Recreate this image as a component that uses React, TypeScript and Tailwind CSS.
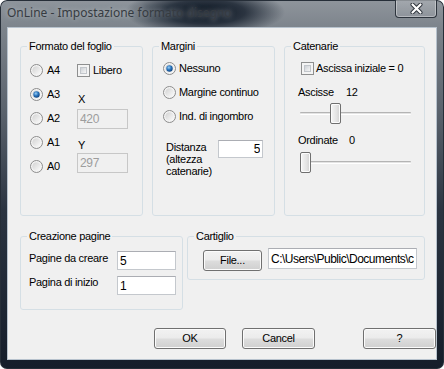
import type { ReactNode } from "react";

const UI = "font-[family-name:Liberation_Sans,Arial,sans-serif] text-[11px] tracking-[-0.3px] text-black";

function Radio({ checked = false }: { checked?: boolean }) {
  return (
    <svg width="13" height="13" viewBox="0 0 13 13" className="shrink-0">
      <defs>
        <linearGradient id="rb" x1="0" y1="0" x2="1" y2="1">
          <stop offset="0" stopColor="#d2d2d2" />
          <stop offset="1" stopColor="#fbfbfb" />
        </linearGradient>
        <radialGradient id="rd" cx="0.4" cy="0.35" r="0.7">
          <stop offset="0" stopColor="#9ad0f5" />
          <stop offset="0.5" stopColor="#2a74bd" />
          <stop offset="1" stopColor="#0c3f7a" />
        </radialGradient>
      </defs>
      <circle cx="6.5" cy="6.5" r="6" fill="#f4f4f4" stroke="#8c8c8c" />
      <circle cx="6.5" cy="6.5" r="4.3" fill="url(#rb)" />
      {checked && <circle cx="6.5" cy="6.5" r="3.2" fill="url(#rd)" />}
    </svg>
  );
}

function Check() {
  return (
    <span className="w-[13px] h-[13px] shrink-0 border border-[#8e8f8f] bg-[#f4f4f4] p-[2px] flex">
      <span className="flex-1 border border-[#c2c6cb] bg-[linear-gradient(135deg,#cdd1d6,#f6f6f6)]" />
    </span>
  );
}

function Btn({ children, className = "" }: { children: ReactNode; className?: string }) {
  return (
    <button
      className={`${className} ${UI} h-[21px] rounded-[3px] border border-[#707070] bg-[linear-gradient(to_bottom,#f2f2f2_0%,#ebebeb_48%,#dddddd_52%,#cfcfcf_100%)] shadow-[inset_0_0_0_1px_#fbfbfb] flex items-center justify-center`}
    >
      {children}
    </button>
  );
}

function Field({ value, className = "", disabled = false, right = false }: { value: string; className?: string; disabled?: boolean; right?: boolean }) {
  return (
    <input
      defaultValue={value}
      disabled={disabled}
      className={`${className} font-[family-name:Liberation_Sans,Arial,sans-serif] text-[12px] px-[2px] border outline-none ${
        right ? "text-right" : ""
      } ${
        disabled
          ? "bg-[#f0f0f0] border-[#c7c7c7] text-[#9d9d9d]"
          : "bg-white border-[#c4c8cd] border-t-[#abadb3] text-black"
      }`}
    />
  );
}

function Slider({ value, max, className = "" }: { value: number; max: number; className?: string }) {
  const left = Math.round((value / max) * 100);
  return (
    <div className={`${className} relative w-[111px] h-[21px] flex items-center`}>
      <div className="w-full h-[3px] border-t border-[#b4b4b4] border-b border-b-white bg-[#e3e3e3] rounded-[1px]" />
      <div
        className="absolute top-0 w-[11px] h-[21px] rounded-[2px] border border-[#6f6f6f] bg-[linear-gradient(to_right,#f6f6f6,#e4e4e4_60%,#d2d2d2)] shadow-[inset_0_0_0_1px_#fcfcfc]"
        style={{ left }}
      />
    </div>
  );
}

function Group({ title, className = "", children }: { title: string; className?: string; children: ReactNode }) {
  return (
    <fieldset className={`${className} min-w-0 border border-[#d5dfe5] rounded-[3px] px-[6px]`}>
      <legend className="px-[2px] leading-[13px]">{title}</legend>
      {children}
    </fieldset>
  );
}

export default function App() {
  return (
    <div className="w-[444px] h-[369px] flex flex-col rounded-[7px] overflow-hidden shadow-[inset_0_0_0_1px_#262e38] bg-[radial-gradient(ellipse_80px_24px_at_205px_12px,rgba(6,14,26,0.97)_0%,rgba(12,22,36,0.75)_50%,rgba(12,22,36,0)_100%),linear-gradient(to_bottom,#8f959c_0px,#7b828a_30px,#5b636d_110px,#2b3441_210px,#151d2a_369px)]">
      <div className="h-[27px] flex items-start">
        <span className="pl-[7px] pt-[6px] text-[12px] leading-[14px] text-[#363b41] [text-shadow:0_0_5px_rgba(230,235,240,0.55)] font-[family-name:Noto_Sans,Open_Sans,sans-serif] whitespace-nowrap">
          OnLine - Impostazione formato disegno
        </span>
        <button className="ml-auto mr-[7px] w-[42px] h-[18px] rounded-b-[4px] border border-t-0 border-[#2d343d] bg-[linear-gradient(to_bottom,rgba(255,255,255,0.18),rgba(255,255,255,0.08))] shadow-[inset_0_0_0_1px_rgba(255,255,255,0.35)] flex items-center justify-center">
          <svg width="13" height="11" viewBox="0 0 13 11">
            <path d="M2.5 1.5 L10.5 9.5 M10.5 1.5 L2.5 9.5" stroke="#2a3038" strokeWidth="4" strokeLinecap="round" />
            <path d="M2.5 1.5 L10.5 9.5 M10.5 1.5 L2.5 9.5" stroke="#ffffff" strokeWidth="2.2" strokeLinecap="round" />
          </svg>
        </button>
      </div>

      <div className={`${UI} mx-[7px] h-[333px] bg-[#f0f0f0] border border-[#b7c2cd] pt-[12px] pl-[12px] flex flex-col`}>
        <div className="flex items-start gap-[9px]">
          <Group title="Formato del foglio" className="w-[123px] h-[176px]">
            <div className="flex pt-[5px]">
              <div className="ml-[3px] w-[47px] flex flex-col">
                {["A4", "A3", "A2", "A1", "A0"].map((r) => (
                  <label key={r} className="h-[24px] flex items-center gap-[4px]">
                    <Radio checked={r === "A3"} />
                    {r}
                  </label>
                ))}
              </div>
              <div className="flex flex-col">
                <label className="h-[24px] flex items-center gap-[3px]">
                  <Check />
                  Libero
                </label>
                <span className="mt-[11px] leading-[13px] pl-[1px]">X</span>
                <Field value="420" disabled className="mt-[3px] w-[51px] h-[20px]" />
                <span className="mt-[10px] leading-[13px] pl-[1px]">Y</span>
                <Field value="297" disabled className="mt-[1px] w-[51px] h-[20px]" />
              </div>
            </div>
          </Group>

          <Group title="Margini" className="w-[123px] h-[176px]">
            <div className="pt-[3px] pl-[4px] flex flex-col">
              {["Nessuno", "Margine continuo", "Ind. di ingombro"].map((m) => (
                <label key={m} className="h-[24px] flex items-center gap-[3px] whitespace-nowrap">
                  <Radio checked={m === "Nessuno"} />
                  {m}
                </label>
              ))}
            </div>
            <div className="mt-[13px] ml-[7px] flex items-start">
              <div className="w-[52px] leading-[12px]">
                Distanza
                <br />
                (altezza
                <br />
                catenarie)
              </div>
              <Field value="5" right className="-mt-[1px] w-[45px] h-[18px]" />
            </div>
          </Group>

          <Group title="Catenarie" className="w-[141px] h-[176px]">
            <div className="pt-[3px] flex flex-col">
              <label className="ml-[10px] h-[24px] flex items-center gap-[2px] whitespace-nowrap">
                <Check />
                Ascissa iniziale = 0
              </label>
              <div className="ml-[7px] h-[24px] flex items-center">
                <span className="w-[48px]">Ascisse</span>
                <span>12</span>
              </div>
              <Slider value={12} max={40} className="ml-[9px] -mt-[1px]" />
              <div className="ml-[7px] mt-[4px] h-[24px] flex items-center">
                <span className="w-[51px]">Ordinate</span>
                <span>0</span>
              </div>
              <Slider value={0} max={40} className="ml-[9px]" />
            </div>
          </Group>
        </div>

        <div className="mt-[14px] flex items-start gap-[4px]">
          <Group title="Creazione pagine" className="w-[163px] h-[80px]">
            <div className="pt-[8px] ml-[2px] flex flex-col gap-[6px]">
              <div className="flex items-start">
                <span className="w-[89px] pt-[1px] leading-[13px]">Pagine da creare</span>
                <Field value="5" className="w-[59px] h-[19px]" />
              </div>
              <div className="flex items-start">
                <span className="w-[89px] leading-[13px]">Pagina di inizio</span>
                <Field value="1" className="w-[59px] h-[19px]" />
              </div>
            </div>
          </Group>

          <Group title="Cartiglio" className="w-[238px] h-[50px]">
            <div className="flex items-start">
              <Btn className="ml-[9px] mt-[7px] w-[59px]">File...</Btn>
              <Field
                value={"C:\\Users\\Public\\Documents\\cartiglio.dwg"}
                className="ml-[6px] mt-[5px] w-[149px] h-[21px] tracking-[-0.5px]"
              />
            </div>
          </Group>
        </div>

        <div className="mt-[18px] flex">
          <Btn className="ml-[134px] w-[72px]">OK</Btn>
          <Btn className="ml-[16px] w-[73px]">Cancel</Btn>
          <Btn className="ml-[48px] w-[73px]">?</Btn>
        </div>
      </div>
    </div>
  );
}
